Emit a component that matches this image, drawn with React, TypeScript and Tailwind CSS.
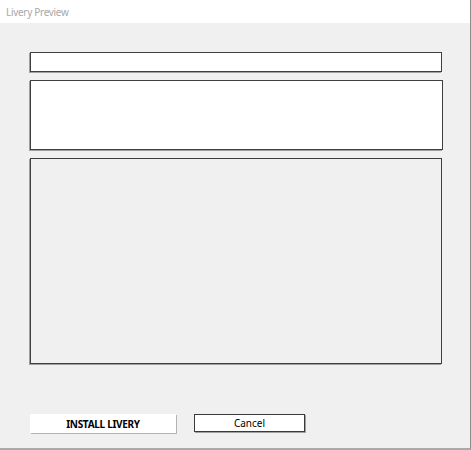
import React from 'react';

const font = { fontFamily: '"Noto Sans", "Open Sans", Arial, sans-serif' };

export default function App() {
    return (
        <div className="w-[471px] h-[450px] flex flex-col bg-[#f0f0f0] overflow-hidden" style={font}>
            <div className="flex h-[450px] w-[471px] flex-col border-r border-r-[#8c8c8c] border-b-2 border-b-[#a9a9a9]">
                {/* Title bar */}
                <div className="h-[23px] shrink-0 bg-white flex items-center pl-[6px]">
                    <span className="text-[10px] tracking-[-0.3px] leading-none text-[#a8a8a8]">Livery Preview</span>
                </div>

                {/* Body */}
                <div className="flex-1 flex flex-col pl-[30px] pt-[29px]">
                    <div className="w-[412px] h-[20px] bg-white border border-[#3f3f3f] shadow-[-1px_1px_0_#a0a0a0]" />
                    <div className="mt-[8px] w-[413px] h-[70px] bg-white border border-[#3f3f3f] shadow-[-1px_1px_0_#a0a0a0]" />
                    <div className="mt-[8px] w-[412px] h-[206px] border border-[#3f3f3f] shadow-[-1px_1px_0_#a0a0a0]" />

                    <div className="mt-[50px] flex gap-[18px]">
                        <button className="w-[146px] h-[19px] bg-white shadow-[1px_1px_0_#b4b4b4] flex items-center justify-center text-[10px] tracking-[-0.3px] font-bold text-black leading-none">
                            INSTALL LIVERY
                        </button>
                        <button className="w-[111px] h-[18px] bg-white border border-[#3a3a3a] shadow-[1px_1px_0_#a0a0a0] flex items-center justify-center text-[10px] text-black leading-none">
                            Cancel
                        </button>
                    </div>
                </div>
            </div>
        </div>
    );
}
